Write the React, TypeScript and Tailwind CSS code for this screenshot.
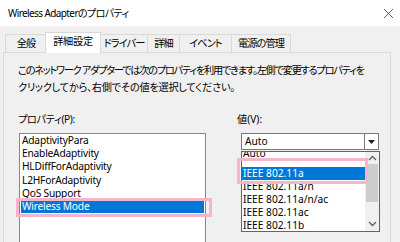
import { X } from "lucide-react";

const font =
  "[font-family:'Noto_Sans','Noto_Sans_CJK_JP',sans-serif] [font-feature-settings:'palt']";

// タブ: 幅はスクリーンショットに合わせて固定
const tabs = [
  { label: "全般", w: "w-[42px]", ml: "" },
  { label: "詳細設定", w: "w-[56px]", ml: "ml-[-2px]" },
  { label: "ドライバー", w: "w-[48px]", ml: "ml-[-1px]" },
  { label: "詳細", w: "w-[33px]", ml: "ml-[-1px]" },
  { label: "イベント", w: "w-[53px]", ml: "ml-[-1px]" },
  { label: "電源の管理", w: "w-[60px]", ml: "ml-[-1px]" },
];

const properties = [
  "AdaptivityPara",
  "EnableAdaptivity",
  "HLDiffForAdaptivity",
  "L2HForAdaptivity",
  "QoS Support",
  "Wireless Mode",
];

const values = [
  "IEEE 802.11a",
  "IEEE 802.11a/n",
  "IEEE 802.11a/n/ac",
  "IEEE 802.11ac",
  "IEEE 802.11b",
];

const App = () => {
  return (
    <div
      className={`relative w-[400px] h-[242px] overflow-hidden bg-[#f0f0f0] text-[10.2px] text-black ${font}`}
    >
      {/* タイトルバー */}
      <div className="h-[26px] bg-white flex items-center justify-between pl-[8px] pr-[3px]">
        <span className="text-[10px] tracking-[-0.6px] mt-[1px]">
          Wireless Adapterのプロパティ
        </span>
        <X size={17} strokeWidth={1} className="text-[#222]" />
      </div>

      {/* タブ */}
      <div className="flex items-end h-[26px] pl-[5px]">
        {tabs.map((tab, i) =>
          i === 1 ? (
            <div
              key={tab.label}
              className={`${tab.w} ${tab.ml} h-[21px] mb-[-1px] pb-[2px] bg-white border border-b-0 border-[#d9d9d9] flex items-center justify-center relative z-10 tracking-[-0.3px]`}
            >
              {tab.label}
            </div>
          ) : (
            <div
              key={tab.label}
              className={`${tab.w} ${tab.ml} h-[18px] border border-b-0 border-[#d9d9d9] flex items-center justify-center tracking-[-0.9px]`}
            >
              {tab.label}
            </div>
          )
        )}
      </div>

      {/* パネル */}
      <div className="ml-[3px] w-[388px] h-[200px] border border-[#d9d9d9] bg-[#f0f0f0] pt-[9px] pl-[14px]">
        <div className="leading-[17px] whitespace-nowrap">
          <div className="tracking-[-1.25px]">
            このネットワーク アダプターでは次のプロパティを利用できます。左側で変更するプロパティを
          </div>
          <div className="tracking-[-0.25px]">
            クリックしてから、右側でその値を選択してください。
          </div>
        </div>

        <div className="flex mt-[16px]">
          {/* 左: プロパティ */}
          <div className="w-[219px]">
            <div className="h-[14px] leading-[14px] tracking-[-0.4px]">プロパティ(P):</div>
            <div className="mt-[7px] ml-[1px] w-[187px] h-[120px] bg-white border border-[#828790] px-px tracking-[-0.2px]">
              {properties.map((p) => (
                <div
                  key={p}
                  className={`h-[13.2px] leading-[13px] pl-[1px] ${
                    p === "Wireless Mode" ? "bg-[#0078d7] text-white" : ""
                  }`}
                >
                  {p}
                </div>
              ))}
            </div>
          </div>

          {/* 右: 値 */}
          <div className="w-[150px]">
            <div className="h-[14px] leading-[14px]">値(V):</div>
            <div className="mt-[7px] ml-[4px]">
              <div className="w-[138px] h-[17px] bg-white border border-[#7a7a7a] flex items-center justify-between">
                <span className="pl-[3px]">Auto</span>
                <div className="w-[14px] h-[15px] border-l border-[#7a7a7a] flex items-center justify-center">
                  <svg width="7" height="4" viewBox="0 0 7 4">
                    <path d="M0 0h7L3.5 4z" fill="#222" />
                  </svg>
                </div>
              </div>
              <div className="w-[139px] h-[81px] mt-[1px] bg-white border border-[#646464] flex overflow-hidden">
                <div className="flex-1">
                  {/* 上にスクロールして見切れている項目 */}
                  <div className="h-[20px] mt-[-5px] leading-[13px] pl-[1px]">Auto</div>
                  {values.map((v) => (
                    <div
                      key={v}
                      className={`h-[13px] leading-[13px] pl-[1px] ${
                        v === "IEEE 802.11a" ? "bg-[#0078d7] text-white" : ""
                      }`}
                    >
                      {v}
                    </div>
                  ))}
                </div>
                <div className="w-[14px] bg-[#f0f0f0] flex flex-col items-center">
                  <svg width="9" height="11" viewBox="0 0 9 11" className="mt-[1px]">
                    <path d="M1 7l3.5-3.5L8 7" stroke="#606060" strokeWidth="1.3" fill="none" />
                  </svg>
                  <div className="w-[12px] h-[38px] bg-[#cdcdcd]" />
                  <div className="flex-1" />
                  <svg width="9" height="11" viewBox="0 0 9 11" className="mb-[2px]">
                    <path d="M1 4l3.5 3.5L8 4" stroke="#606060" strokeWidth="1.3" fill="none" />
                  </svg>
                </div>
              </div>
            </div>
          </div>
        </div>
      </div>

      {/* ハイライト枠 */}
      <div className="absolute left-[16px] top-[198px] w-[196px] h-[19px] border-[3px] border-[#f3b6cc] pointer-events-none" />
      <div className="absolute left-[237px] top-[158px] w-[131px] h-[26px] border-[3px] border-[#f3b6cc] pointer-events-none" />
    </div>
  );
};

export default App;
